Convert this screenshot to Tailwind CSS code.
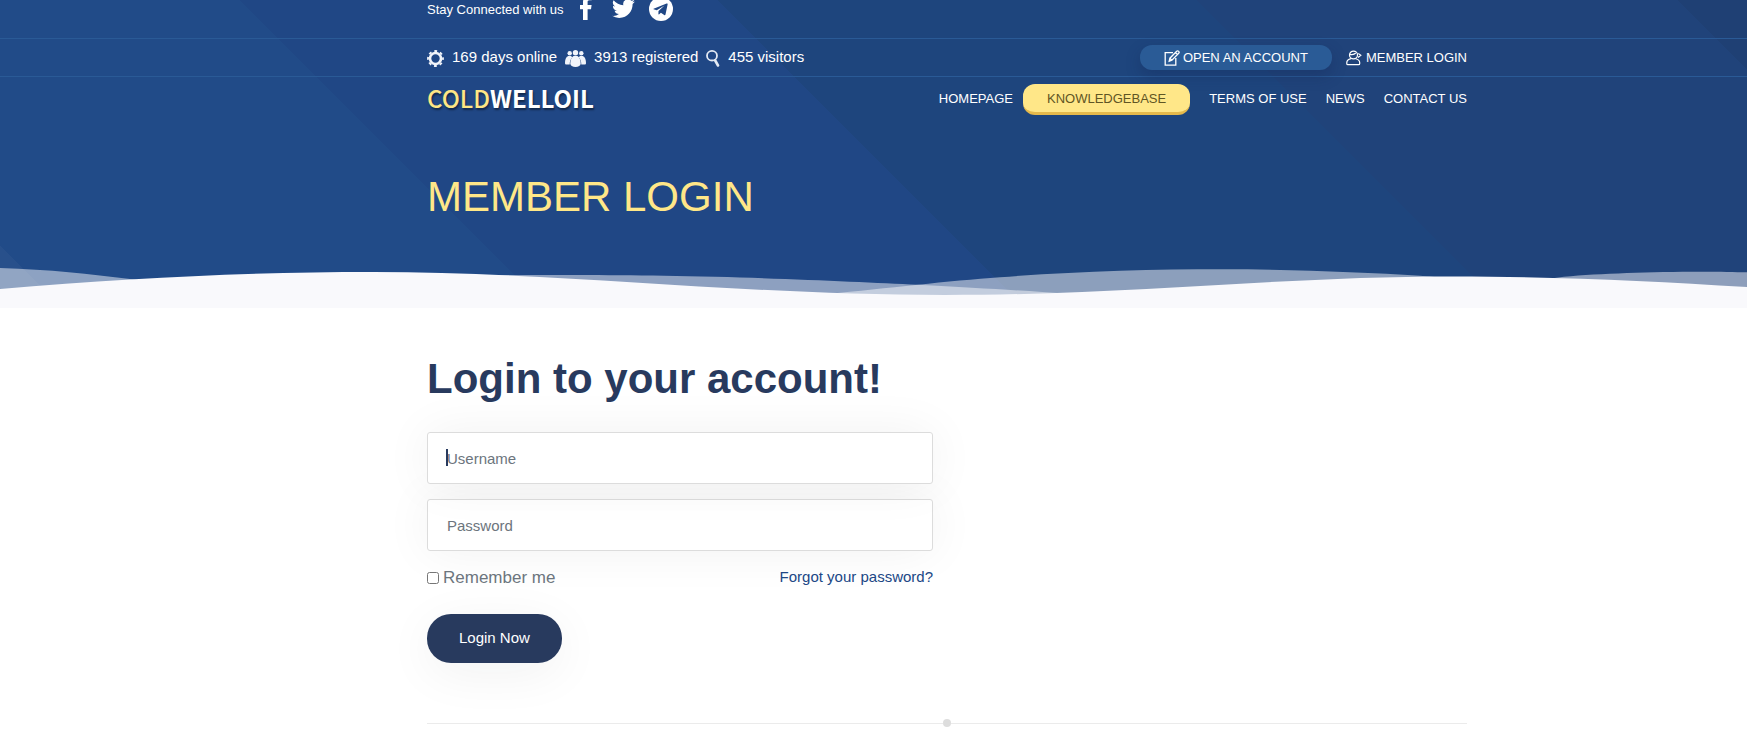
<!DOCTYPE html>
<html lang="en">
<head>
<meta charset="utf-8">
<meta name="viewport" content="width=device-width, initial-scale=1">
<title>Member Login - Coldwelloil</title>
<script src="https://cdn.jsdelivr.net/npm/@tailwindcss/browser@4"></script>
</head>
<body class="bg-white font-['Liberation_Sans',Arial,sans-serif] text-[#283a5e] overflow-x-hidden">
<header class="relative h-[308px] text-white bg-[linear-gradient(45deg,#28508b_44px,#214b88_44px,#214b88_387px,#204785_387px,#204785_725px,#1e457d_725px,#1e457d_1064px,#20437a_1064px,#20437a_1404px,#1f4074_1404px)]">
  <!-- Social bar -->
  <div class="h-[39px] border-b border-[#2a5a96] pl-[427px] pr-[280px] flex items-start text-[13px] leading-5">
    <span>Stay Connected with us</span>
    <a href="#" aria-label="Facebook" class="ml-4">
      <svg class="w-3 h-[21px]" viewBox="0 4 12 21" fill="currentColor"><path d="M3 24V13.200H0V9h3V6C3 2.500 5 .5 8.300 .5c1.600 0 2.900.1 3.400.2v3.600H9.500C7.900 4.300 7.600 5 7.600 6.200V9h4l-.6 4.200H7.600V24z"/></svg>
    </a>
    <a href="#" aria-label="Twitter" class="ml-5">
      <svg class="w-[23px] h-[21px]" viewBox="0 3 24 21" preserveAspectRatio="xMidYMin meet" fill="currentColor"><path d="M23.950 4.600a10 10 0 0 1-2.800.8 4.900 4.900 0 0 0 2.200-2.700c-1 .6-2 1-3.100 1.200a4.900 4.900 0 0 0-8.400 4.500A14 14 0 0 1 1.700 3.200a4.900 4.900 0 0 0 1.500 6.500 4.900 4.900 0 0 1-2.200-.6v.1a4.900 4.900 0 0 0 3.900 4.800 5 5 0 0 1-2.200.1 4.900 4.900 0 0 0 4.600 3.400A9.900 9.900 0 0 1 0 19.500a14 14 0 0 0 7.500 2.200c9.100 0 14-7.500 14-14v-.6a10 10 0 0 0 2.450-2.500z"/></svg>
    </a>
    <a href="#" aria-label="Telegram" class="ml-[14px]">
      <svg class="w-6 h-[21px]" viewBox="0 3 24 21"><circle cx="12" cy="12" r="12" fill="#fff"/><path d="M4.600 11.800 17.600 6.600c.7-.3 1.200.1 1 .9l-2.100 10c-.2.8-.7 1-1.300.6l-3.300-2.400-1.700 1.600c-.3.300-.8.200-.8-.3l.1-3.100 6-5.500-7.700 4.800-3.200-.9c-.6-.2-.6-.3 0-.5z" fill="#204785"/></svg>
    </a>
  </div>
  <!-- Statistics and account links -->
  <div class="h-[38px] border-b border-[#2a5a96] pl-[427px] pr-[280px] flex items-center justify-between">
    <div class="flex items-center text-[15px] leading-5 whitespace-nowrap">
      <svg class="mt-px w-[17px] h-[17px]" viewBox="0 0 17 17" fill="none" stroke="#f1f4fa"><circle cx="8.500" cy="8.500" r="5.500" stroke-width="2.600"/><circle cx="8.500" cy="8.500" r="7.500" stroke-width="1.800" stroke-dasharray="2.900 2.990" stroke-dashoffset="1.450"/></svg>
      <span class="ml-2 -mt-0.5">169 days online</span>
      <svg class="ml-2 mt-px w-[21px] h-[17px]" viewBox="0 0 21 17" fill="#f1f4fa"><circle cx="10.500" cy="2.700" r="2.700"/><circle cx="4.700" cy="3.200" r="2.200"/><circle cx="16.300" cy="3.200" r="2.200"/><path d="M3.200 6h3l1 1.500c-1.600 1.600-2.500 4-2.500 7H1.500C.5 14.500 0 14 0 13c0-3 .8-6 3.200-7zM17.800 6h-3l-1 1.500c1.600 1.600 2.500 4 2.500 7h3.200c1 0 1.500-.5 1.500-1.500 0-3-.8-6-3.200-7z"/><path d="M8.500 6h4c2 1.200 3.200 4.500 3.200 7.500 0 2-2.200 3.500-5.200 3.500s-5.200-1.500-5.200-3.500C5.300 10.500 6.500 7.200 8.500 6z"/></svg>
      <span class="ml-2 -mt-0.5">3913 registered</span>
      <svg class="ml-2 mt-px w-[14px] h-[17px]" viewBox="0 0 14 17" fill="none" stroke="#e4eaf4"><ellipse cx="6" cy="5.700" rx="5" ry="4.800" stroke-width="1.800"/><path d="M9.200 10.500l2.800 5" stroke-width="2.600" stroke-linecap="round"/></svg>
      <span class="ml-2 -mt-0.5">455 visitors</span>
    </div>
    <div class="flex items-center text-[13px] leading-5 whitespace-nowrap">
      <a href="#" class="flex items-center gap-[3px] h-[25px] px-6 rounded-xl bg-[#2a5b96] shadow-[0_6px_14px_rgba(20,40,90,0.35)]">
        <svg class="w-4 h-4" viewBox="0 0 16 16" fill="none" stroke="currentColor" stroke-width="1.300"><path d="M9 2.700H1.200v12.500h10.600V8"/><path d="M5.200 11.200l.7-3 6.800-6.900c.7-.6 1.500-.4 2 .1s.6 1.300 0 1.900L7.900 10.200zM11.500 2.600l2.100 2.100M5.900 8.200l2 2"/></svg>
        OPEN AN ACCOUNT
      </a>
      <a href="#" class="ml-[14px] flex items-center gap-1">
        <svg class="w-4 h-4" viewBox="0 0 16 16" fill="none" stroke="currentColor" stroke-width="1.200"><ellipse cx="7.500" cy="5" rx="4" ry="3.900"/><path d="M4 4.300c2 .5 4.300.2 5.800-1.300M12.300 3.500l2.500 1.700-2.800 2.300M5 8.700C2.500 9.400.8 10.800.8 12.500v1.200c0 .6.400 1 1 1h10.900c.6 0 1-.4 1-1v-1.200c0-1.700-1.700-3.100-4-3.800"/></svg>
        MEMBER LOGIN
      </a>
    </div>
  </div>
  <!-- Logo and main navigation -->
  <div class="pl-[427px] pr-[280px] pt-[7px] flex items-start justify-between text-[13px] leading-[27px] whitespace-nowrap">
    <a href="#" class="text-[24px] font-['Noto_Sans_CJK_SC',sans-serif] [text-shadow:1px_2px_2px_rgba(0,0,0,0.45)]"><span class="font-medium text-[#fee685]">COLD</span><span class="font-bold">WELLOIL</span></a>
    <nav class="flex items-start">
      <a href="#" class="pt-px">HOMEPAGE</a>
      <a href="#" class="ml-[10px] mr-[19px] pt-px px-6 rounded-xl bg-[#ffe788] text-[#5f5524] border-b-3 border-[#e5b94c]">KNOWLEDGEBASE</a>
      <a href="#" class="pt-px">TERMS OF USE</a>
      <a href="#" class="ml-[19px] pt-px">NEWS</a>
      <a href="#" class="ml-[19px] pt-px">CONTACT US</a>
    </nav>
  </div>
  <h1 class="pl-[427px] mt-[58px] text-[42px] leading-[48px] text-[#ffe788]">MEMBER LOGIN</h1>
  <!-- Wave divider -->
  <svg class="absolute inset-x-0 bottom-0 w-full h-[53px]" viewBox="0 0 1747 53" preserveAspectRatio="none" fill="#f9f9fc" aria-hidden="true">
    <path opacity=".5" d="M0 13C50 14.500 90 19 130 24C200 34 400 20 524 20C600 20 640 20 715 21.700C800 24 870 27.500 918 29.700C980 33 1030 36 1065 38.500V53H0z"/>
    <path opacity=".5" d="M825 39C860 36 885 33 918 29.700C945 27 975 24 1000 22.300C1075 16.500 1150 14.300 1223 14.300C1295 14.300 1365 17.500 1420 20.700L1480 26V53H825z"/>
    <path opacity=".5" d="M1500 30L1564 21.700C1600 18.500 1650 16.700 1702 16.700C1720 16.700 1735 17 1747 17.300V53H1500z"/>
    <path d="M0 34C130 23 250 17 373 17C560 17 740 40 945 40C1130 40 1280 21.500 1453 21.500C1560 21.500 1650 26 1747 32V53H0z"/>
  </svg>
</header>
<main class="pl-[427px] pr-[280px] pt-[46px]">
  <form class="max-w-[506px]">
    <h2 class="text-[42px] leading-[50px] font-bold whitespace-nowrap">Login to your account!</h2>
    <div class="relative mt-7">
      <input type="text" aria-label="Username" placeholder="Username" class="block w-full h-[52px] px-[19px] text-[15px] bg-white border border-[#dcdcdc] rounded-[3px] placeholder:text-[#6c757d] shadow-[0_0_50px_rgba(20,40,30,0.06)] outline-none">
      <span class="absolute left-[19px] top-[17px] w-[2px] h-[17px] bg-[#283a5e]" aria-hidden="true"></span>
    </div>
    <input type="password" aria-label="Password" placeholder="Password" class="mt-[15px] block w-full h-[52px] px-[19px] text-[15px] bg-white border border-[#dcdcdc] rounded-[3px] placeholder:text-[#6c757d] shadow-[0_0_50px_rgba(20,40,30,0.06)] outline-none">
    <div class="mt-4 flex items-start justify-between leading-5">
      <label class="mt-[1px] flex items-center gap-1 text-[17px] text-[#6c757d]"><input type="checkbox" class="w-3 h-3">Remember me</label>
      <a href="#" class="text-[15px] text-[#204785]">Forgot your password?</a>
    </div>
    <button type="button" class="mt-[26px] block h-[49px] px-8 rounded-3xl bg-[#283a5e] text-white text-[15px] shadow-[0_10px_50px_rgba(20,40,30,0.06)]">Login Now</button>
  </form>
  <div class="mt-[56px] h-2 flex items-center">
    <span class="flex-1 h-px bg-[#ebebeb]"></span>
    <span class="w-2 h-2 rounded-full bg-[#dddddd]"></span>
    <span class="flex-1 h-px bg-[#ebebeb]"></span>
  </div>
</main>
</body>
</html>
